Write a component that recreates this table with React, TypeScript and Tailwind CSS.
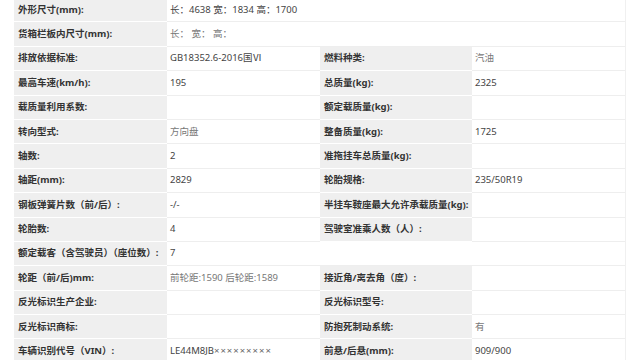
import React from "react";

type Row = { l1: string; v1: string; l2?: string; v2?: string; span?: boolean; v1light?: boolean; v2light?: boolean };

const rows: Row[] = [
  { l1: "外形尺寸(mm):", v1: "长：4638 宽：1834 高：1700", span: true },
  { l1: "货箱栏板内尺寸(mm):", v1: "长：  宽：  高：", span: true, v1light: true },
  { l1: "排放依据标准:", v1: "GB18352.6-2016国Ⅵ", l2: "燃料种类:", v2: "汽油", v2light: true },
  { l1: "最高车速(km/h):", v1: "195", l2: "总质量(kg):", v2: "2325" },
  { l1: "载质量利用系数:", v1: "", l2: "额定载质量(kg):", v2: "" },
  { l1: "转向型式:", v1: "方向盘", l2: "整备质量(kg):", v2: "1725", v1light: true },
  { l1: "轴数:", v1: "2", l2: "准拖挂车总质量(kg):", v2: "" },
  { l1: "轴距(mm):", v1: "2829", l2: "轮胎规格:", v2: "235/50R19" },
  { l1: "钢板弹簧片数（前/后）:", v1: "-/-", l2: "半挂车鞍座最大允许承载质量(kg):", v2: "" },
  { l1: "轮胎数:", v1: "4", l2: "驾驶室准乘人数（人）:", v2: "" },
  { l1: "额定载客（含驾驶员）（座位数）:", v1: "7", span: true },
  { l1: "轮距（前/后)mm:", v1: "前轮距:1590 后轮距:1589", l2: "接近角/离去角（度）:", v2: "", v1light: true },
  { l1: "反光标识生产企业:", v1: "", l2: "反光标识型号:", v2: "" },
  { l1: "反光标识商标:", v1: "", l2: "防抱死制动系统:", v2: "有", v2light: true },
  { l1: "车辆识别代号（VIN）:", v1: "LE44M8JB", l2: "前悬/后悬(mm):", v2: "909/900" },
];

const font = { fontFamily: '"Noto Sans", "Noto Sans CJK SC", sans-serif' };

function Label({ text }: { text: string }) {
  return (
    <div className="flex items-center bg-[#efefef] border-b border-white pl-[4px] text-[9.5px] font-bold text-[#333] whitespace-nowrap overflow-hidden">
      {text}
    </div>
  );
}

function Value({ text, light, span, vin }: { text: string; light?: boolean; span?: boolean; vin?: boolean }) {
  return (
    <div
      className={
        "flex items-center bg-white border-b border-[#eeeeee] pl-[3px] text-[9.5px] whitespace-nowrap overflow-hidden " +
        (light ? "text-[#777]" : "text-[#444]") +
        (span ? " col-span-3" : "")
      }
    >
      {text}
      {vin && <span className="tracking-[1px] text-[#666]">×××××××××</span>}
    </div>
  );
}

export default function App() {
  return (
    <div className="w-[640px] h-[360px] bg-white overflow-hidden" style={font}>
      <div className="flex -mt-[2px]">
        <div className="w-[14px] shrink-0" />
        <div className="grid grid-cols-[153px_153px_152px_153px] auto-rows-[24.4px] border-r border-[#f0f0f0]">
          {rows.map((r, i) => (
            <React.Fragment key={i}>
              <Label text={r.l1} />
              <Value text={r.v1} light={r.v1light} span={r.span} vin={i === 14} />
              {!r.span && (
                <>
                  <Label text={r.l2 || ""} />
                  <Value text={r.v2 || ""} light={r.v2light} />
                </>
              )}
            </React.Fragment>
          ))}
        </div>
      </div>
    </div>
  );
}
